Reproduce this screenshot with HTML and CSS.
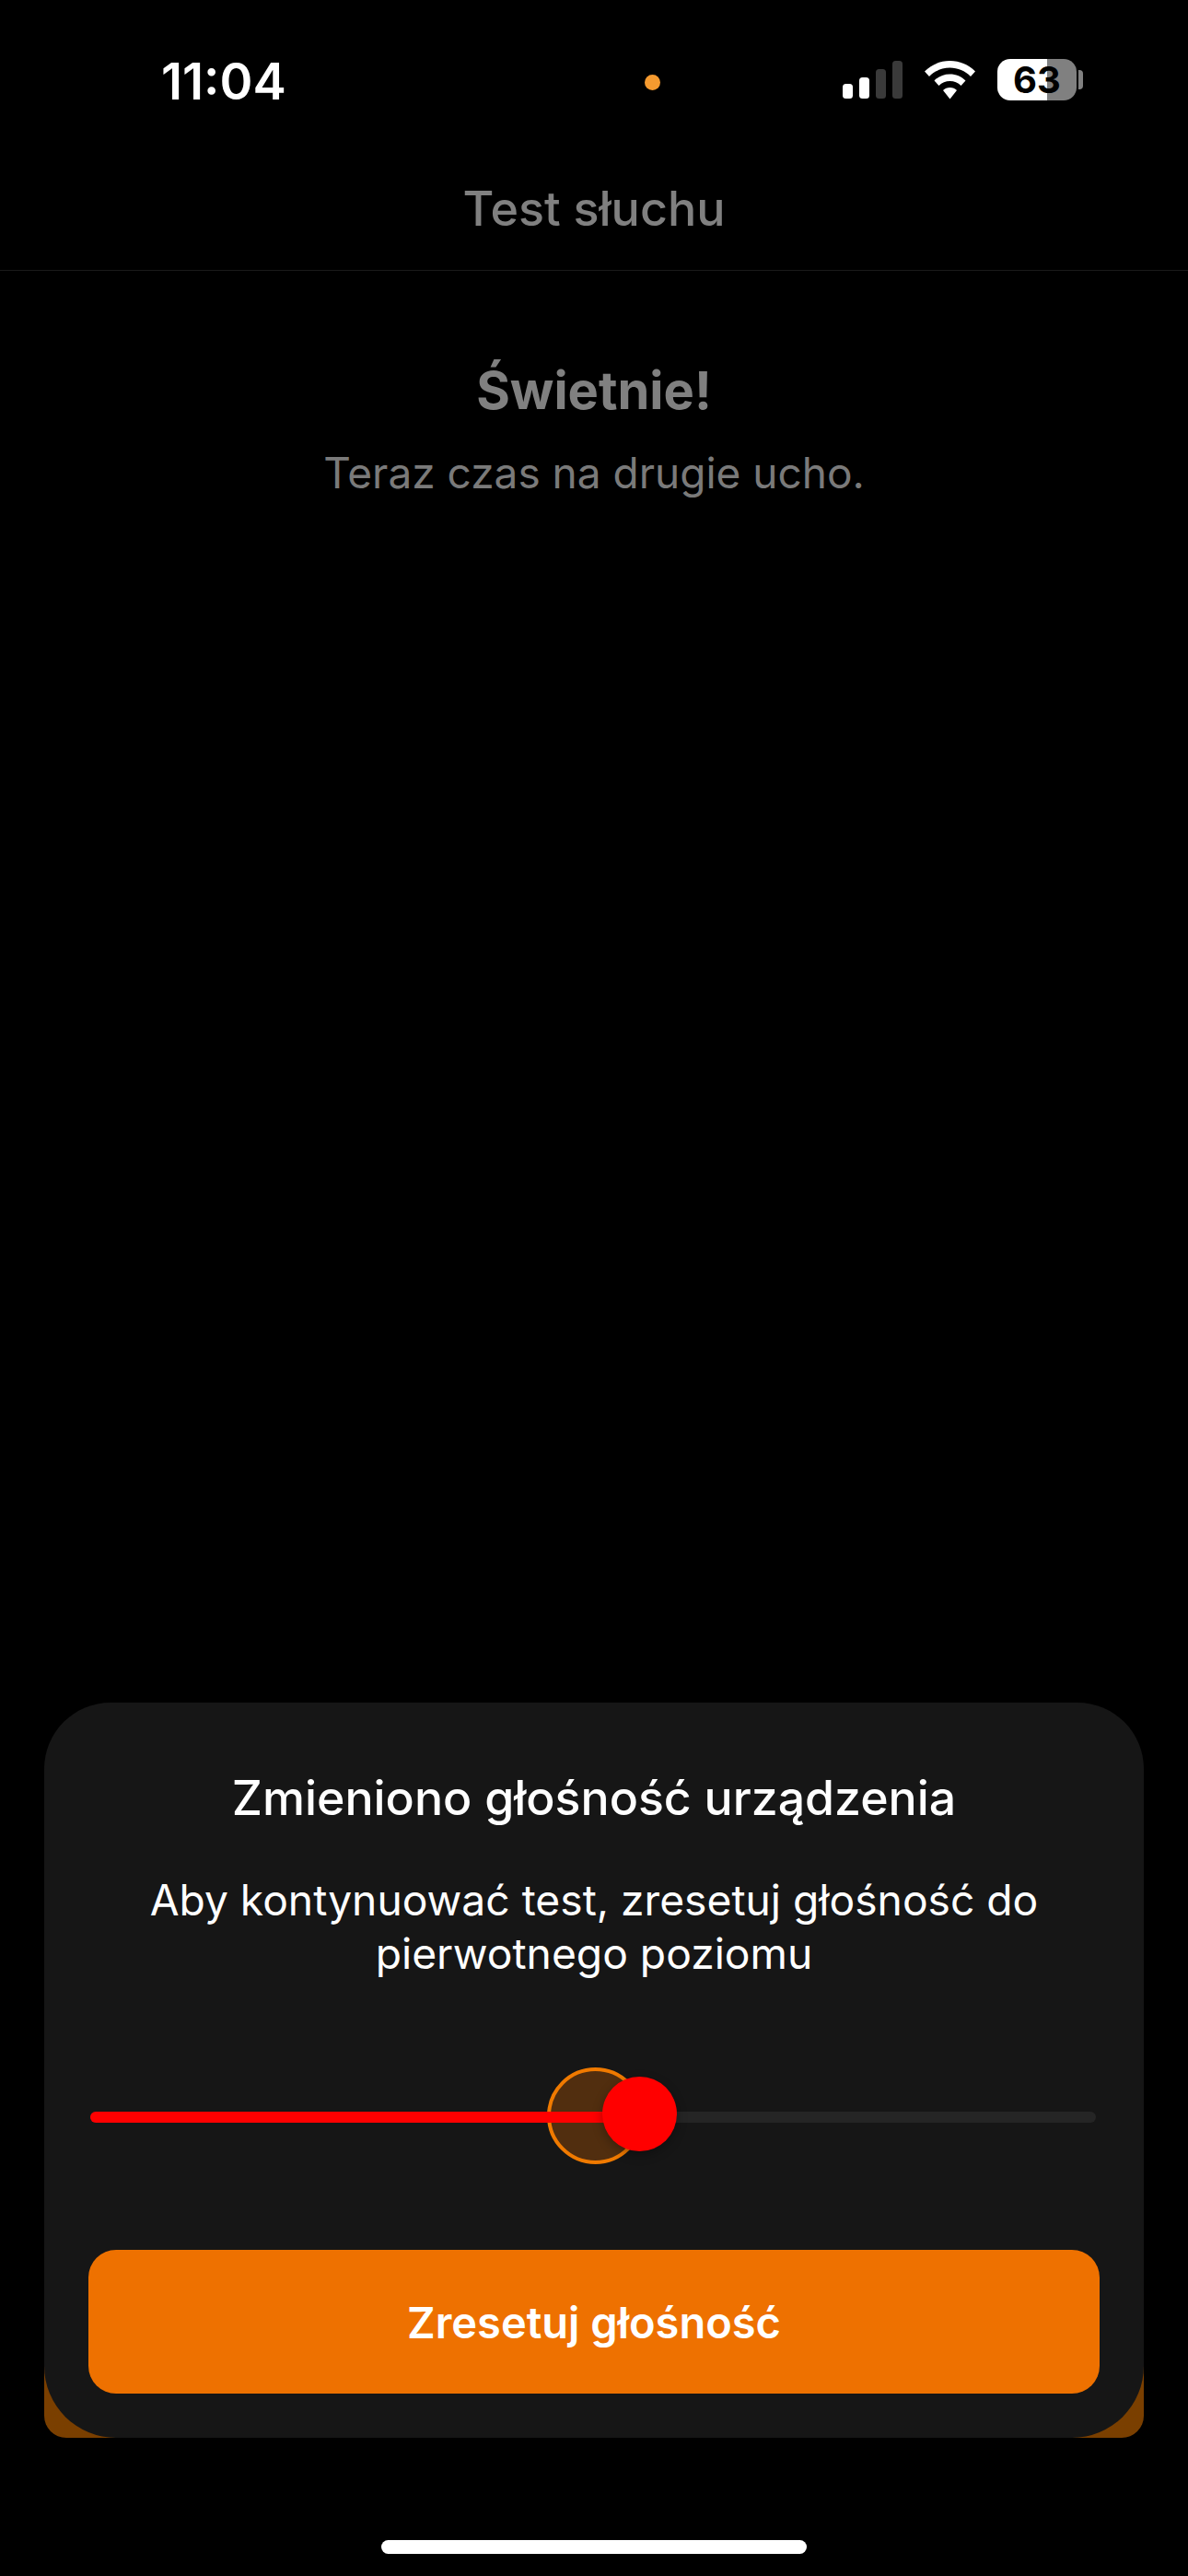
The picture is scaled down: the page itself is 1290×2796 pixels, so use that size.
FILE: index.html
```html
<!DOCTYPE html>
<html lang="pl">
<head>
    <meta charset="UTF-8">
    <meta name="viewport" content="width=device-width, initial-scale=1.0">
    <title>Test słuchu</title>
    <link rel="stylesheet" href="styles.css">
</head>
<body>
    <div class="screen">
        <div class="status-bar">
            <span class="time">11:04</span>
            <span class="mic-dot"></span>
            <div class="status-icons">
                <svg class="signal" width="65" height="41" viewBox="0 0 65 41">
                    <rect x="0" y="25" width="11" height="16" rx="3.5" fill="#fff"/>
                    <rect x="18" y="18" width="11" height="23" rx="3.5" fill="#fff"/>
                    <rect x="36" y="9" width="11" height="32" rx="3.5" fill="#3a3a3a"/>
                    <rect x="54" y="0" width="11" height="41" rx="3.5" fill="#3a3a3a"/>
                </svg>
                <svg class="wifi" width="57" height="42" viewBox="0 0 56 42">
                    <path d="M28 0C17.500 0 8 4 0.500 11.500L5.500 17C11.500 11 19.500 7.500 28 7.500S44.500 11 50.500 17L55.500 11.500C48 4 38.500 0 28 0Z" fill="#fff"/>
                    <path d="M28 14.500C21.500 14.500 15.500 17 11 21.500L16 27C19.200 23.800 23.500 22 28 22S36.800 23.800 40 27L45 21.500C40.500 17 34.500 14.500 28 14.500Z" fill="#fff"/>
                    <path d="M28 29C25 29 22.500 30 20.500 32L28 41.500L35.500 32C33.500 30 31 29 28 29Z" fill="#fff"/>
                </svg>
                <div class="battery">
                    <div class="battery-body">
                        <span class="battery-text">63</span>
                    </div>
                    <div class="battery-cap"></div>
                </div>
            </div>
        </div>

        <div class="nav-bar">Test słuchu</div>

        <div class="content">
            <h2>Świetnie!</h2>
            <p>Teraz czas na drugie ucho.</p>
        </div>

        <div class="sheet-wrap">
            <div class="sheet">
                <h3>Zmieniono głośność urządzenia</h3>
                <p>Aby kontynuować test, zresetuj głośność do<br>pierwotnego poziomu</p>
                <div class="slider">
                    <div class="target"></div>
                    <div class="track">
                        <div class="track-fill"></div>
                    </div>
                    <div class="thumb"></div>
                </div>
                <button class="reset-btn">Zresetuj głośność</button>
            </div>
        </div>

        <div class="home-area">
            <div class="home-indicator"></div>
        </div>
    </div>
</body>
</html>
```

FILE: styles.css
```css
* {
    box-sizing: border-box;
}
body {
    margin: 0;
    background: #000;
    font-family: Inter, "Noto Sans", sans-serif;
}
.screen {
    width: 1290px;
    height: 2796px;
    display: flex;
    flex-direction: column;
    overflow: hidden;
}
.status-bar {
    height: 176px;
    display: flex;
    align-items: center;
    padding: 0 114px 0 175px;
    flex-shrink: 0;
}
.time {
    width: 525px;
    color: #fff;
    font-size: 54.5px;
    font-weight: 600;
}
.mic-dot {
    width: 17px;
    height: 17px;
    margin-top: 2px;
    border-radius: 50%;
    background: #f59a2f;
}
.status-icons {
    margin-left: auto;
    margin-bottom: 3px;
    display: flex;
    align-items: center;
    gap: 23px;
}
.battery {
    display: flex;
    align-items: center;
    gap: 2px;
}
.battery-body {
    width: 86px;
    height: 45px;
    border-radius: 14px;
    background: linear-gradient(90deg, #fff 54px, #808080 54px);
    display: flex;
    align-items: center;
    justify-content: center;
}
.battery-text {
    color: #000;
    font-size: 40px;
    line-height: 40px;
    font-weight: 700;
}
.battery-cap {
    width: 5px;
    height: 21px;
    background: #808080;
    border-radius: 0 4px 4px 0;
}
.nav-bar {
    height: 118px;
    flex-shrink: 0;
    border-bottom: 1px solid #1a1a1a;
    color: #808080;
    font-size: 52px;
    font-weight: 500;
    text-align: center;
    padding-top: 19px;
}
.content {
    flex: 1;
    text-align: center;
    padding-top: 96px;
}
.content h2 {
    margin: 0;
    color: #808080;
    font-size: 56px;
    font-weight: 700;
}
.content p {
    margin: 27px 0 0;
    color: #7a7a7a;
    font-size: 46px;
    font-weight: 400;
}
.sheet-wrap {
    margin: 0 48px;
    border-radius: 72px 72px 24px 24px;
    background: linear-gradient(transparent 600px, #7a3f00 600px);
    flex-shrink: 0;
}
.sheet {
    height: 798px;
    padding: 0 48px;
    background: #161616;
    border-radius: 72px 72px 78px 78px;
    text-align: center;
    color: #fff;
}
.sheet h3 {
    margin: 0;
    padding-top: 72px;
    font-size: 51.8px;
    font-weight: 500;
}
.sheet p {
    margin: 51px 0 0;
    font-size: 46.2px;
    line-height: 58px;
}
.slider {
    position: relative;
    height: 120px;
    margin-top: 89px;
    padding-top: 54px;
}
.track {
    position: relative;
    height: 12px;
    margin: 0 4px 0 2px;
    border-radius: 6px;
    background: #252525;
    overflow: hidden;
}
.track-fill {
    width: 562px;
    height: 100%;
    background: #f00;
}
.target {
    position: absolute;
    left: 498px;
    top: 6px;
    width: 105px;
    height: 105px;
    border: 4px solid #f07a00;
    border-radius: 50%;
    background: rgba(238, 113, 0, 0.28);
}
.thumb {
    position: absolute;
    left: 558px;
    top: 16px;
    width: 81px;
    height: 81px;
    border-radius: 50%;
    background: #f00;
    box-shadow: 0 4px 12px rgba(0, 0, 0, 0.3);
}
.reset-btn {
    display: block;
    width: 100%;
    height: 156px;
    margin-top: 84px;
    border: none;
    border-radius: 30px;
    background: #ee7100;
    color: #fff;
    font-family: inherit;
    font-size: 47px;
    font-weight: 600;
}
.home-area {
    height: 150px;
    flex-shrink: 0;
    display: flex;
    justify-content: center;
    padding-top: 111px;
}
.home-indicator {
    width: 462px;
    height: 15px;
    border-radius: 8px;
    background: #fff;
}
```
